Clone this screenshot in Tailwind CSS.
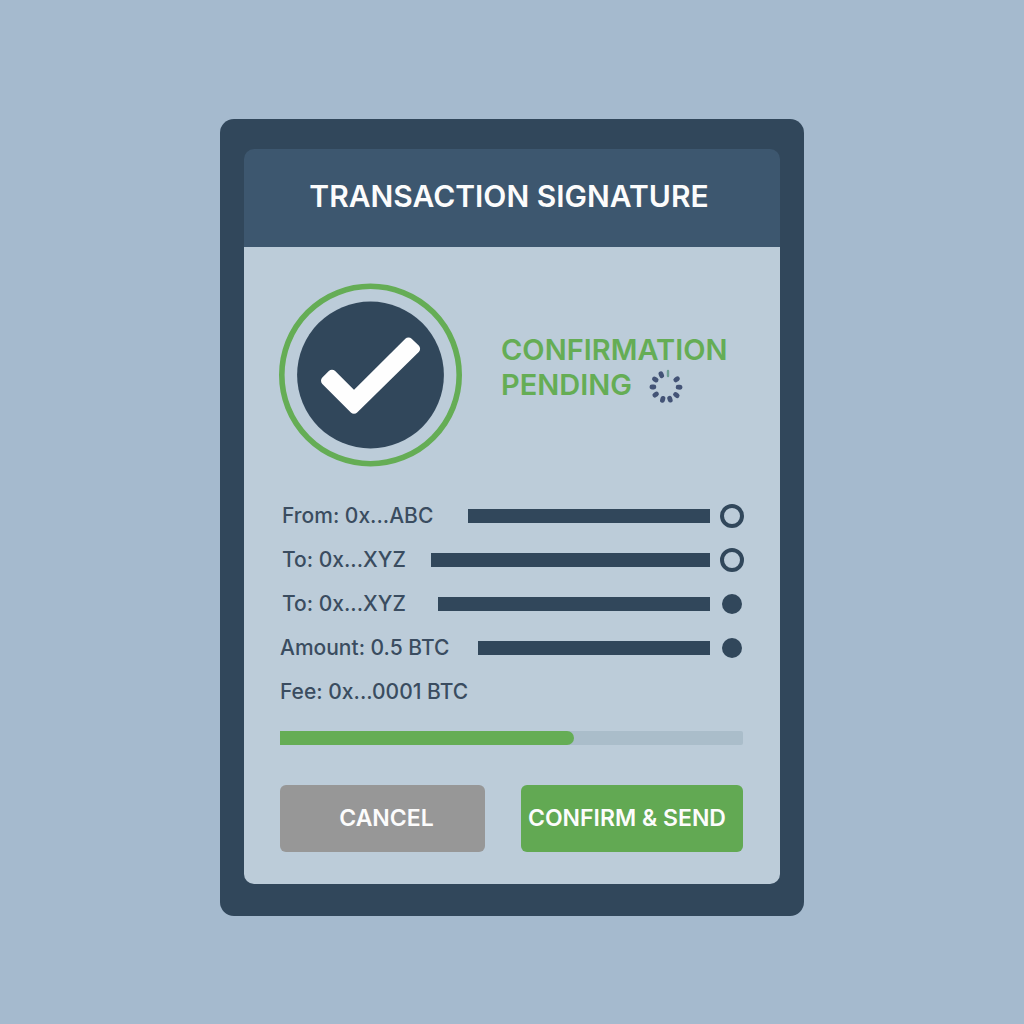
<!DOCTYPE html>
<html lang="en">
<head>
    <meta charset="UTF-8">
    <meta name="viewport" content="width=device-width, initial-scale=1.0">
    <title>Transaction Signature</title>
    <!-- Tailwind CSS CDN -->
    <script src="https://cdn.jsdelivr.net/npm/@tailwindcss/browser@4"></script>
</head>
<body class="bg-[#a5bace] font-['Inter',sans-serif]">

<main class="min-h-screen flex items-center justify-center pt-[11px]">
    <div class="w-full max-w-[584px] px-6 pt-[30px] pb-8 rounded-[14px] bg-[#31475b]">
        <div>
            <!-- Header -->
            <header class="h-[98px] flex items-center justify-center pr-1.5 pb-1 rounded-t-[10px] bg-[#3d576f]">
                <h1 class="text-[30px] font-semibold text-[#fcfcfc]">TRANSACTION SIGNATURE</h1>
            </header>

            <div class="px-[35px] pt-9 pb-8 rounded-b-[10px] bg-[#bcccd9]">
                <!-- Status -->
                <div class="flex items-center gap-[38px] pb-px">
                    <svg class="w-[184px] h-[184px] shrink-0" viewBox="0 0 184 184" fill="none" aria-hidden="true">
                        <circle cx="91.5" cy="92" r="88.7" stroke="#65ad55" stroke-width="5.6" />
                        <circle cx="91.5" cy="92" r="73.4" fill="#31475b" />
                        <path d="M46.5 97.7 53 91.2 75 113.2 129.5 58.9 136.6 65.8 75 126.2Z" fill="#fefefe" stroke="#fefefe" stroke-width="9" stroke-linejoin="round" />
                    </svg>
                    <div class="pb-[17px] text-[29px] leading-[35px] font-semibold text-[#65ad55]">
                        <p>CONFIRMATION</p>
                        <p class="flex items-center gap-4">
                            PENDING
                            <svg class="w-9 h-9 -mb-1.5" viewBox="-18 -18 36 36" stroke="#435376" stroke-width="4.8" stroke-linecap="round" aria-hidden="true">
                                <path d="M12.1 0h2" transform="rotate(1)" />
                                <path d="M12.1 0h2" transform="rotate(38)" />
                                <path d="M11.8 0h2" transform="rotate(72)" />
                                <path d="M11.8 0h2" transform="rotate(105)" />
                                <path d="M11.8 0h2" transform="rotate(144)" />
                                <path d="M12.1 0h2" transform="rotate(180)" />
                                <path d="M12.1 0h2" transform="rotate(215)" />
                                <path d="M12.1 0h2" transform="rotate(249)" />
                                <path d="M2-16v5" stroke="#6f9f95" stroke-width="2.4" />
                                <path d="M12.1 0h2" transform="rotate(324)" />
                            </svg>
                        </p>
                    </div>
                </div>

                <!-- Details -->
                <ul class="mt-[26px] px-px text-[21px] font-medium text-[#3a4c60]">
                    <li class="flex items-center h-11 gap-2.5 pl-0.5">
                        <span class="mr-auto">From: 0x...ABC</span>
                        <span class="w-[242px] h-3.5 bg-[#31475b]"></span>
                        <span class="w-6 h-6 rounded-full border-4 border-[#31475b]"></span>
                    </li>
                    <li class="flex items-center h-11 gap-2.5 pl-0.5">
                        <span class="mr-auto">To: 0x...XYZ</span>
                        <span class="w-[279px] h-3.5 bg-[#31475b]"></span>
                        <span class="w-6 h-6 rounded-full border-4 border-[#31475b]"></span>
                    </li>
                    <li class="flex items-center h-11 gap-2.5 pl-0.5">
                        <span class="mr-auto">To: 0x...XYZ</span>
                        <span class="w-[272px] h-3.5 bg-[#31475b]"></span>
                        <span class="w-5 h-5 mx-0.5 rounded-full bg-[#31475b]"></span>
                    </li>
                    <li class="flex items-center h-11 gap-2.5">
                        <span class="mr-auto">Amount: 0.5 BTC</span>
                        <span class="w-[232px] h-3.5 bg-[#31475b]"></span>
                        <span class="w-5 h-5 mx-0.5 rounded-full bg-[#31475b]"></span>
                    </li>
                    <li class="flex items-center h-11">
                        <span>Fee: 0x...0001 BTC</span>
                    </li>
                </ul>

                <!-- Progress -->
                <div class="mt-[17px] ml-px mr-0.5 h-3.5 rounded-r-xs bg-[#aabdca]" role="progressbar" aria-label="Confirmation progress" aria-valuenow="63" aria-valuemin="0" aria-valuemax="100">
                    <div class="h-full rounded-r-full bg-[#65ad55]" style="width: 63.5%"></div>
                </div>

                <!-- Actions -->
                <div class="mt-10 ml-px mr-0.5 grid grid-cols-[205fr_222fr] gap-9 text-[23px] font-semibold text-[#fcfcfc]">
                    <button type="button" class="h-[67px] pl-2 rounded-md bg-[#979797]">CANCEL</button>
                    <button type="submit" class="h-[67px] pr-2.5 rounded-md bg-[#62a953] whitespace-nowrap">CONFIRM &amp; SEND</button>
                </div>
            </div>
        </div>
    </div>
</main>

</body>
</html>
